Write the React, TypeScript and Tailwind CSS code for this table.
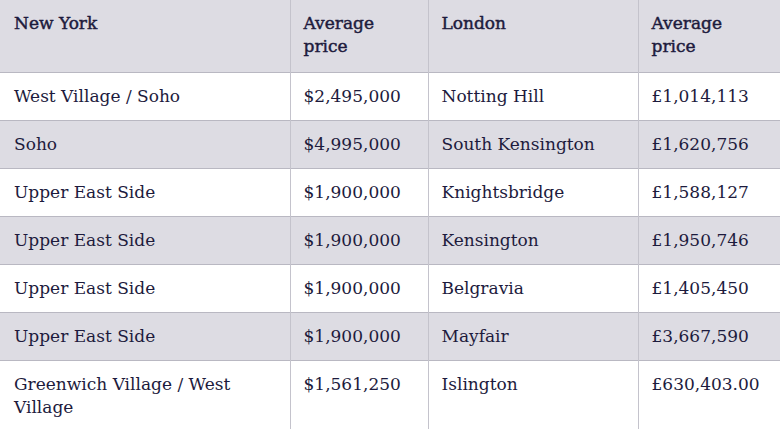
const rows = [
  ["West Village / Soho", "$2,495,000", "Notting Hill", "£1,014,113"],
  ["Soho", "$4,995,000", "South Kensington", "£1,620,756"],
  ["Upper East Side", "$1,900,000", "Knightsbridge", "£1,588,127"],
  ["Upper East Side", "$1,900,000", "Kensington", "£1,950,746"],
  ["Upper East Side", "$1,900,000", "Belgravia", "£1,405,450"],
  ["Upper East Side", "$1,900,000", "Mayfair", "£3,667,590"],
  ["Greenwich Village / West Village", "$1,561,250", "Islington", "£630,403.00"],
];

export default function App() {
  return (
    <div className="w-[780px] h-[429px] overflow-hidden bg-white text-[#1d1b3d] font-['DejaVu_Serif',serif] text-[17px] leading-[23px]">
      <table className="w-[780px] table-fixed border-collapse">
        <colgroup>
          <col className="w-[290px]" />
          <col className="w-[138px]" />
          <col className="w-[210px]" />
          <col className="w-[142px]" />
        </colgroup>
        <thead>
          <tr className="bg-[#dddce3] h-[72px] align-top">
            <th className="text-left font-normal [-webkit-text-stroke:0.45px] px-[14px] pt-[12px] border-r border-[#c4c3cc]">New York</th>
            <th className="text-left font-normal [-webkit-text-stroke:0.45px] px-[13px] pt-[12px] border-r border-[#c4c3cc]">Average price</th>
            <th className="text-left font-normal [-webkit-text-stroke:0.45px] px-[13px] pt-[12px] border-r border-[#c4c3cc]">London</th>
            <th className="text-left font-normal [-webkit-text-stroke:0.45px] px-[13px] pt-[12px]">Average price</th>
          </tr>
        </thead>
        <tbody>
          {rows.map((r, i) => (
            <tr
              key={i}
              className={`${i % 2 === 1 ? "bg-[#dddce3]" : "bg-white"} ${i === rows.length - 1 ? "h-[69px] align-top" : "h-[48px]"} border-t border-[#b9b8c2]`}
            >
              {r.map((c, j) => (
                <td
                  key={j}
                  className={`text-left ${j === 0 ? "px-[14px]" : "px-[13px]"} ${i === rows.length - 1 ? "pt-[12px]" : ""} ${j < 3 ? "border-r border-[#c4c3cc]" : ""}`}
                >
                  {c}
                </td>
              ))}
            </tr>
          ))}
        </tbody>
      </table>
    </div>
  );
}
